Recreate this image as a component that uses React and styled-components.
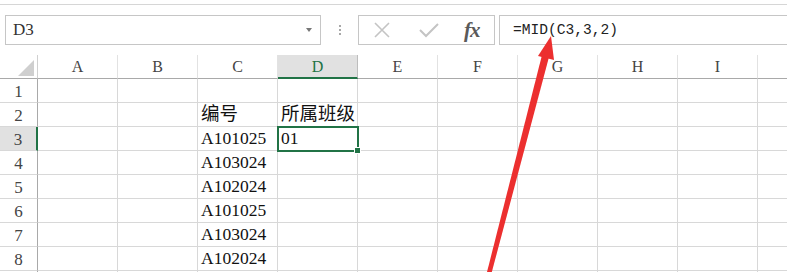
import React from 'react';
import styled, { createGlobalStyle } from 'styled-components';

const GlobalStyle = createGlobalStyle`
  html, body {
    margin: 0;
    padding: 0;
    background: #fff;
    overflow: hidden;
  }
  #root {
    position: relative;
    width: 787px;
    height: 272px;
    overflow: hidden;
  }
`;

const serif = `"Liberation Serif", "Noto Sans CJK SC", serif`;

const Page = styled.div`
  position: relative;
  width: 787px;
  height: 272px;
  overflow: hidden;
  font-family: ${serif};
`;

const TopEdge = styled.div`
  height: 4px;
  border-bottom: 1px solid #d6d6d6;
`;

const FormulaRow = styled.div`
  display: flex;
  height: 30px;
  margin: 10px 0 10px 5px;
  box-sizing: border-box;
`;

const NameBox = styled.div`
  width: 316px;
  box-sizing: border-box;
  border: 1px solid #c6c6c6;
  display: flex;
  align-items: center;
  justify-content: space-between;
  padding: 0 8px 0 7px;
  font-size: 17px;
  color: #333;
`;

const Caret = styled.span`
  width: 0;
  height: 0;
  border-left: 3px solid transparent;
  border-right: 3px solid transparent;
  border-top: 4px solid #777;
`;

const Grip = styled.div`
  width: 37px;
  display: flex;
  flex-direction: column;
  align-items: center;
  justify-content: center;
  gap: 2px;

  span {
    width: 2px;
    height: 2px;
    background: #a8a8a8;
  }
`;

const Buttons = styled.div`
  width: 137px;
  box-sizing: border-box;
  border: 1px solid #c6c6c6;
  display: flex;
  align-items: center;
  padding-left: 14px;
  gap: 28px;
`;

const Fx = styled.span`
  font-family: ${serif};
  font-style: italic;
  font-weight: bold;
  font-size: 21px;
  color: #5a5a5a;
  letter-spacing: -1px;
  margin-left: -3px;
`;

const FormulaInput = styled.div`
  flex: 1;
  margin-left: 4px;
  box-sizing: border-box;
  border: 1px solid #c6c6c6;
  border-right: none;
  display: flex;
  align-items: center;
  padding-left: 13px;
  font-family: "Liberation Mono", monospace;
  font-size: 14.6px;
  color: #222;
`;

const Grid = styled.div`
  display: grid;
  grid-template-columns: 38px repeat(10, 80px);
  grid-auto-rows: 24px;
  width: max-content;
`;

const Cell = styled.div`
  position: relative;
  box-sizing: border-box;
  border-right: 1px solid #d8d8d8;
  border-bottom: 1px solid #d8d8d8;
  display: flex;
  align-items: flex-end;
  padding: 0 0 1px 3px;
  font-family: ${serif};
  font-size: ${(p) => (p.cjk ? '18.5px' : '17.5px')};
  color: #111;
  white-space: nowrap;

  ${(p) => p.selected && `
    outline: 2px solid #217346;
    outline-offset: -1px;
    z-index: 2;
    &::after {
      content: '';
      position: absolute;
      right: -4px;
      bottom: -4px;
      width: 5px;
      height: 5px;
      background: #217346;
      border: 1px solid #fff;
    }
  `}
`;

const ColHead = styled.div`
  box-sizing: border-box;
  display: flex;
  align-items: center;
  justify-content: center;
  font-size: 16px;
  color: ${(p) => (p.active ? '#217346' : '#444')};
  background: ${(p) => (p.active ? '#e1e1e1' : '#fff')};
  border-right: 1px solid ${(p) => (p.active ? '#bdbdbd' : '#e2e2e2')};
  border-bottom: ${(p) => (p.active ? '2px solid #217346' : '1px solid #a9a9a9')};
  padding-top: 1px;
`;

const Corner = styled.div`
  position: relative;
  box-sizing: border-box;
  border-right: 1px solid #d0d0d0;
  border-bottom: 1px solid #a9a9a9;

  &::after {
    content: '';
    position: absolute;
    right: 3px;
    bottom: 2px;
    width: 0;
    height: 0;
    border-left: 16px solid transparent;
    border-bottom: 16px solid #cfcfcf;
  }
`;

const RowHead = styled.div`
  box-sizing: border-box;
  display: flex;
  align-items: center;
  justify-content: center;
  font-size: 17px;
  color: #444;
  background: ${(p) => (p.active ? '#e1e1e1' : '#fff')};
  border-right: ${(p) => (p.active ? '2px solid #217346' : '1px solid #a9a9a9')};
  border-bottom: 1px solid #d8d8d8;
  padding-top: 2px;
`;

const Arrow = styled.svg`
  position: absolute;
  left: 0;
  top: 0;
  pointer-events: none;
`;

const columns = ['A', 'B', 'C', 'D', 'E', 'F', 'G', 'H', 'I', 'J'];
// the last column and row only peek in at the edges, their labels fall outside
const visibleCols = 9;
const visibleRows = 8;

const data = {
  2: { C: '编号', D: '所属班级' },
  3: { C: 'A101025', D: '01' },
  4: { C: 'A103024' },
  5: { C: 'A102024' },
  6: { C: 'A101025' },
  7: { C: 'A103024' },
  8: { C: 'A102024' },
};

const isCjk = (text) => /[\u4e00-\u9fff]/.test(text);

function CancelIcon() {
  return (
    <svg width="18" height="18" viewBox="0 0 18 18">
      <path d="M2 2 L16 16 M16 2 L2 16" stroke="#c4c4c4" strokeWidth="1.6" fill="none" />
    </svg>
  );
}

function EnterIcon() {
  return (
    <svg width="20" height="16" viewBox="0 0 20 16">
      <path d="M1 8 L7 14 L19 2" stroke="#c4c4c4" strokeWidth="2" fill="none" />
    </svg>
  );
}

export default function App() {
  const rows = [1, 2, 3, 4, 5, 6, 7, 8, 9];

  return (
    <Page>
      <GlobalStyle />
      <TopEdge />
      <FormulaRow>
        <NameBox>
          D3
          <Caret />
        </NameBox>
        <Grip>
          <span />
          <span />
          <span />
        </Grip>
        <Buttons>
          <CancelIcon />
          <EnterIcon />
          <Fx>fx</Fx>
        </Buttons>
        <FormulaInput>=MID(C3,3,2)</FormulaInput>
      </FormulaRow>

      <Grid>
        <Corner />
        {columns.map((c, i) => (
          <ColHead key={c} active={c === 'D'}>{i < visibleCols ? c : ''}</ColHead>
        ))}
        {rows.map((r) => (
          <React.Fragment key={r}>
            <RowHead active={r === 3}>{r <= visibleRows ? r : ''}</RowHead>
            {columns.map((c) => {
              const value = data[r] && data[r][c];
              return (
                <Cell
                  key={c}
                  selected={r === 3 && c === 'D'}
                  cjk={value ? isCjk(value) : false}
                >
                  {value}
                </Cell>
              );
            })}
          </React.Fragment>
        ))}
      </Grid>

      <Arrow width="787" height="272" viewBox="0 0 787 272">
        <polygon points="486,276 490.5,277 549,57 542,55" fill="#ec2f2f" />
        <polygon points="551,36 538,56 554,60" fill="#ec2f2f" />
      </Arrow>
    </Page>
  );
}
